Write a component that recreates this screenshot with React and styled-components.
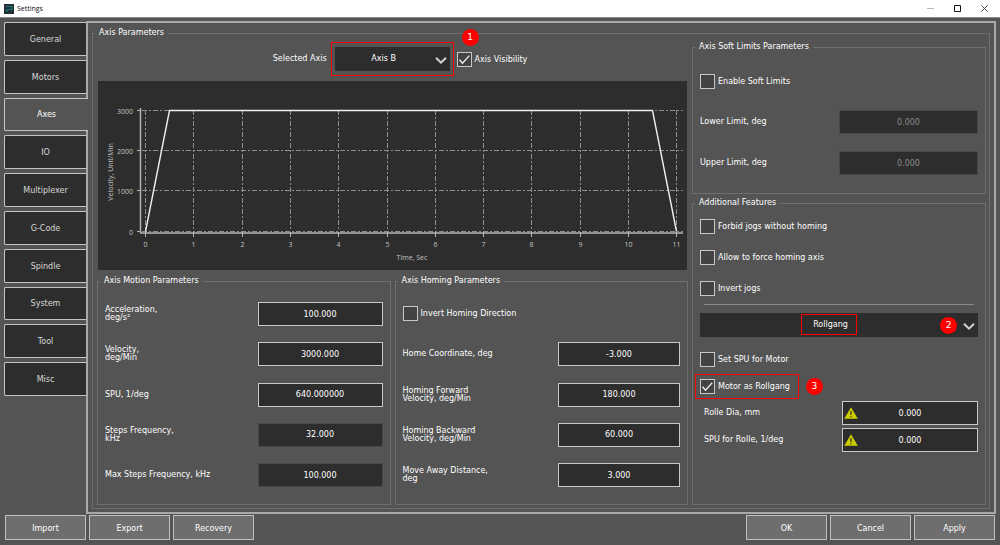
import React from "react";
import styled, { createGlobalStyle, css } from "styled-components";

const GlobalStyle = createGlobalStyle`
  *, *::before, *::after { box-sizing: border-box; }
  body {
    margin: 0;
    background: #545454;
    color: #fff;
    font: 8px/12px "DejaVu Sans", Verdana, sans-serif;
  }
  button, input, select { font: inherit; color: inherit; }
`;

const Window = styled.div`
  display: flex;
  flex-direction: column;
  min-height: 100vh;
  background: #545454;
`;

const TitleBar = styled.header`
  display: flex;
  align-items: center;
  gap: 3px;
  height: 18px;
  padding: 0 4px;
  background: #fff;
  border-bottom: 1px solid #8a8a8a;
  color: #111;
  font-family: "Open Sans", "Segoe UI", sans-serif;
`;

const WindowTitle = styled.h1`
  flex: 1;
  margin: 0;
  font-size: 7px;
  font-weight: 400;
`;

const WindowButton = styled.button`
  display: flex;
  justify-content: center;
  padding: 0;
  width: 24px;
  border: 0;
  background: none;
`;

const Main = styled.div`
  display: flex;
  flex: 1;
  padding: 3px 4px 1px;
`;

const Tabs = styled.nav`
  position: relative;
  z-index: 1;
  display: flex;
  flex-direction: column;
  gap: 4px;
  width: 82px;
  height: 374px;
  margin-top: 1px;
`;

const Tab = styled.button`
  flex: 1;
  padding: 2px 0 0;
  border: 1px solid #c4c4c4;
  border-right: 0;
  border-radius: 2px 0 0 2px;
  background: #2d2d2d;
  color: #d8d8d8;
  ${(p) =>
    p.$active &&
    css`
      width: calc(100% + 2px);
      background: #545454;
      color: #fff;
    `}
`;

const Panel = styled.main`
  display: flex;
  flex: 1;
  min-width: 0;
  padding: 4px 4px 3px;
  border: 2px solid #a8a8a8;
`;

const Group = styled.fieldset`
  display: flex;
  flex-direction: column;
  flex: ${(p) => (p.$grow ? 1 : "none")};
  min-width: 0;
  margin: 0;
  padding: ${(p) => p.$pad || "0 7px"};
  border: 1px solid #6e6e6e;
`;

const Legend = styled.legend`
  margin-left: ${(p) => p.$indent || 0}px;
  padding: 0 4px;
  line-height: 12px;
`;

const Columns = styled.div`
  display: grid;
  grid-template-columns: minmax(0, 1fr) 294px;
  gap: 4px;
  flex: 1;
`;

const Column = styled.div`
  display: flex;
  flex-direction: column;
  gap: ${(p) => p.$gap || 0}px;
`;

const AxisBar = styled.div`
  display: flex;
  align-items: center;
  justify-content: center;
  height: 24px;
  margin: 6px 0 10px 15px;
`;

const SelectBox = styled.div`
  position: relative;
  width: ${(p) => p.$width || "100%"};
  margin: ${(p) => p.$margin || 0};
`;

const Select = styled.select`
  display: block;
  appearance: none;
  width: 100%;
  height: 24px;
  padding: 0 17px 0 0;
  border: 0;
  border-radius: 0;
  background: #2d2d2d;
  text-align: center;
  text-align-last: center;
`;

const Chevron = styled.svg`
  position: absolute;
  right: 3px;
  top: 9px;
  width: 12px;
  height: 9px;
  pointer-events: none;
`;

const Highlight = styled.span`
  position: absolute;
  z-index: 1;
  inset: ${(p) => p.$inset};
  border: 1px solid #f00;
  pointer-events: none;
`;

const Badge = styled.span`
  position: absolute;
  top: ${(p) => p.$top};
  right: ${(p) => p.$right};
  width: 17px;
  height: 17px;
  border-radius: 50%;
  background: #f00;
  font: 9px/17px "DejaVu Sans", sans-serif;
  text-align: center;
  pointer-events: none;
`;

const CheckLabel = styled.label`
  position: relative;
  display: inline-flex;
  align-items: center;
  align-self: flex-start;
  gap: 3px;
  height: 15px;
  margin: ${(p) => p.$margin || 0};
  white-space: nowrap;
`;

const CheckInput = styled.input`
  appearance: none;
  width: 15px;
  height: 15px;
  margin: 0;
  border: 1px solid #c8c8c8;
  background: #434343;
  & + svg { display: none; }
  &:checked + svg { display: block; }
`;

const Tick = styled.svg`
  position: absolute;
  left: 0;
  top: 0;
  width: 15px;
  height: 15px;
  pointer-events: none;
`;

const Groups = styled.div`
  display: grid;
  grid-template-columns: 1fr 1fr;
  gap: 4px;
  flex: 1;
  margin-top: 5px;
`;

const Fields = styled.div`
  display: flex;
  flex-direction: column;
  flex: ${(p) => (p.$spread ? 1 : "none")};
  justify-content: space-between;
  gap: ${(p) => p.$gap}px;
  padding: ${(p) => p.$pad || 0};
`;

const Row = styled.div`
  display: flex;
  align-items: center;
  justify-content: space-between;
  height: 24px;
`;

const FieldLabel = styled.label`
  line-height: 8px;
  white-space: pre-line;
`;

const InputBox = styled.div`
  position: relative;
  width: ${(p) => p.$width}px;
`;

const Input = styled.input`
  display: block;
  width: 100%;
  height: 24px;
  padding: 0;
  border: 1px solid #c8c8c8;
  border-radius: 0;
  background: #2d2d2d;
  text-align: center;
  ${(p) => p.readOnly && css`border-color: #484848;`}
  &:disabled {
    border-color: #484848;
    color: #8c8c8c;
  }
`;

const WarningIcon = styled.svg`
  position: absolute;
  left: 2px;
  top: 6px;
  width: 14px;
  height: 12px;
`;

const Divider = styled.hr`
  width: calc(100% - 8px);
  margin: 8px 4px;
  border: 0;
  border-top: 1px solid #8c8c8c;
`;

const ChartFrame = styled.div`
  margin: 0 1px;
  background: #2d2d2d;
`;

const ChartSvg = styled.svg`
  display: block;
  width: 100%;
  height: 189px;
  fill: #c4c4c4;
  font: 7px "Open Sans", "Noto Sans", sans-serif;
`;

const Footer = styled.footer`
  display: flex;
  gap: 3px;
  padding: 0 5px 5px;
`;

const Button = styled.button`
  width: 81px;
  height: 25px;
  padding: 2px 0 0;
  border: 1px solid #c0c0c0;
  background: #6e6e6e;
`;

const Spacer = styled.div`
  flex: 1;
`;

function Check({ label, checked, margin, children }) {
  return (
    <CheckLabel $margin={margin}>
      <CheckInput type="checkbox" defaultChecked={checked} />
      <Tick viewBox="0 0 15 15" fill="none" stroke="#f4f4f4" strokeWidth="1.3">
        <path d="M2.5 7.8 5.5 11.2 12.3 3.6" />
      </Tick>
      {label}
      {children}
    </CheckLabel>
  );
}

function Dropdown({ id, value, label, width, margin, children }) {
  return (
    <SelectBox $width={width} $margin={margin}>
      <Select id={id} aria-label={label} defaultValue={value}>
        <option>{value}</option>
      </Select>
      <Chevron viewBox="0 0 12 9" fill="none" stroke="#d4d4d4" strokeWidth="2">
        <path d="M1 1.8 6 6.6 11 1.8" />
      </Chevron>
      {children}
    </SelectBox>
  );
}

function Field({ id, label, value, width, disabled, readOnly, warning }) {
  return (
    <Row>
      <FieldLabel htmlFor={id}>{label}</FieldLabel>
      <InputBox $width={width}>
        <Input id={id} defaultValue={value} disabled={disabled} readOnly={readOnly} />
        {warning && (
          <WarningIcon viewBox="0 0 14 12">
            <path d="M7 0.3 13.8 11.8H0.2Z" fill="#cccc00" />
            <path d="M7 4V8M7 9V10.3" stroke="#4a4a10" strokeWidth="1.4" />
          </WarningIcon>
        )}
      </InputBox>
    </Row>
  );
}

const X0 = 47.5;
const STEP = 48.3;
const xTicks = Array.from({ length: 12 }, (_, i) => ({ value: i, x: Math.round(X0 + i * STEP - 0.5) + 0.5 }));
const yTicks = [
  { value: 3000, y: 29.5 },
  { value: 2000, y: 69.5 },
  { value: 1000, y: 109.5 },
  { value: 0, y: 150.5 },
];

function VelocityChart() {
  return (
    <ChartFrame>
      <ChartSvg viewBox="0 0 589 189" role="img" aria-label="Velocity profile">
        <g stroke="#8e8e8e" strokeDasharray="5 2 2 2">
          {xTicks.map((t) => (
            <path key={t.value} d={`M${t.x} 29V150`} />
          ))}
          {yTicks.map((t) => (
            <path key={t.value} d={`M44 ${t.y}H585`} />
          ))}
        </g>
        <g stroke="#b4b4b4">
          {xTicks.map((t) => (
            <path key={t.value} d={`M${t.x} 151V156`} />
          ))}
          {yTicks.map((t) => (
            <path key={t.value} d={`M39 ${t.y}H43`} />
          ))}
          <path d="M42.5 27V152M42 152H585" strokeWidth="1.5" />
        </g>
        <path
          d={`M${X0} 150.5 71.5 29.5H554.5L578.5 150.5`}
          fill="none"
          stroke="#f0f0f0"
          strokeWidth="1.4"
        />
        {xTicks.map((t) => (
          <text key={t.value} x={t.x} y="166" textAnchor="middle">{t.value}</text>
        ))}
        {yTicks.map((t) => (
          <text key={t.value} x="35" y={t.y + 3} textAnchor="end">{t.value}</text>
        ))}
        <text x="314" y="179" textAnchor="middle">Time, Sec</text>
        <text transform="translate(15 91) rotate(-90)" textAnchor="middle">
          Velocity, Unit/Min
        </text>
      </ChartSvg>
    </ChartFrame>
  );
}

const tabs = ["General", "Motors", "Axes", "IO", "Multiplexer", "G-Code", "Spindle", "System", "Tool", "Misc"];

export default function App() {
  return (
    <Window>
      <GlobalStyle />
      <TitleBar>
        <svg width="10" height="10" viewBox="0 0 10 10" aria-hidden="true">
          <rect width="10" height="10" fill="#263033" />
          <path d="M2 2.5H8V5.5H3V8" fill="none" stroke="#12807e" strokeWidth="1.2" />
        </svg>
        <WindowTitle>Settings</WindowTitle>
        <WindowButton aria-label="Minimize">
          <svg width="7" height="7" viewBox="0 0 7 7"><path d="M0 3.5H7" stroke="#bbb" /></svg>
        </WindowButton>
        <WindowButton aria-label="Maximize">
          <svg width="7" height="7" viewBox="0 0 7 7"><path d="M.5 .5H6.5V6.5H.5Z" fill="none" stroke="#111" /></svg>
        </WindowButton>
        <WindowButton aria-label="Close">
          <svg width="7" height="7" viewBox="0 0 7 7"><path d="M.5 .5 6.5 6.5M6.5 .5 .5 6.5" stroke="#444" /></svg>
        </WindowButton>
      </TitleBar>

      <Main>
        <Tabs aria-label="Settings sections">
          {tabs.map((t) => (
            <Tab key={t} $active={t === "Axes"}>{t}</Tab>
          ))}
        </Tabs>

        <Panel>
          <Group $grow $pad="2px 3px 3px 4px">
            <Legend $indent={-2}>Axis Parameters</Legend>
            <Columns>
              <Column>
                <AxisBar>
                  <FieldLabel htmlFor="axis">Selected Axis</FieldLabel>
                  <Dropdown id="axis" value="Axis B" width="115px" margin="0 7px 0 8px">
                    <Highlight $inset="-5px -4px" />
                    <Badge $top="-18px" $right="-29px">1</Badge>
                  </Dropdown>
                  <Check label="Axis Visibility" checked margin="5px 0 0" />
                </AxisBar>
                <VelocityChart />
                <Groups>
                  <Group>
                    <Legend $indent={-5}>Axis Motion Parameters</Legend>
                    <Fields $spread $pad="15px 0 17px">
                      <Field id="acc" label={"Acceleration,\ndeg/s²"} value="100.000" width={125} />
                      <Field id="vel" label={"Velocity,\ndeg/Min"} value="3000.000" width={125} />
                      <Field id="spu" label="SPU, 1/deg" value="640.000000" width={125} />
                      <Field id="freq" label={"Steps Frequency,\nkHz"} value="32.000" width={125} readOnly />
                      <Field id="maxfreq" label="Max Steps Frequency, kHz" value="100.000" width={125} readOnly />
                    </Fields>
                  </Group>
                  <Group>
                    <Legend $indent={-5}>Axis Homing Parameters</Legend>
                    <Fields $spread $pad="15px 0 17px">
                      <Row>
                        <Check label="Invert Homing Direction" margin="4px 0 0" />
                      </Row>
                      <Field id="home" label="Home Coordinate, deg" value="-3.000" width={122} />
                      <Field id="fwd" label={"Homing Forward\nVelocity, deg/Min"} value="180.000" width={122} />
                      <Field id="bwd" label={"Homing Backward\nVelocity, deg/Min"} value="60.000" width={122} />
                      <Field id="away" label={"Move Away Distance,\ndeg"} value="3.000" width={122} />
                    </Fields>
                  </Group>
                </Groups>
              </Column>

              <Column $gap={3}>
                <Group>
                  <Legend $indent={-5}>Axis Soft Limits Parameters</Legend>
                  <Check label="Enable Soft Limits" margin="21px 0" />
                  <Fields $gap={17} $pad="0 0 18px">
                    <Field id="lower" label="Lower Limit, deg" value="0.000" width={139} disabled />
                    <Field id="upper" label="Upper Limit, deg" value="0.000" width={139} disabled />
                  </Fields>
                </Group>
                <Group $grow>
                  <Legend $indent={-5}>Additional Features</Legend>
                  <Fields $gap={16} $pad="10px 0 0">
                    <Check label="Forbid jogs without homing" />
                    <Check label="Allow to force homing axis" />
                    <Check label="Invert jogs" />
                  </Fields>
                  <Divider />
                  <Dropdown value="Rollgang" label="Axis feature">
                    <Highlight $inset="1px calc(50% - 18px) 2px calc(50% - 38px)" />
                    <Badge $top="4px" $right="21px">2</Badge>
                  </Dropdown>
                  <Fields $gap={12} $pad="15px 0 7px">
                    <Check label="Set SPU for Motor" />
                    <Check label="Motor as Rollgang" checked>
                      <Highlight $inset="-5px -9px -5px -5px" />
                      <Badge $top="-1px" $right="-33px">3</Badge>
                    </Check>
                  </Fields>
                  <Fields $gap={3} $pad="0 0 0 4px">
                    <Field id="dia" label="Rolle Dia, mm" value="0.000" width={136} warning />
                    <Field id="spurolle" label="SPU for Rolle, 1/deg" value="0.000" width={136} warning />
                  </Fields>
                </Group>
              </Column>
            </Columns>
          </Group>
        </Panel>
      </Main>

      <Footer>
        <Button>Import</Button>
        <Button>Export</Button>
        <Button>Recovery</Button>
        <Spacer />
        <Button>OK</Button>
        <Button>Cancel</Button>
        <Button>Apply</Button>
      </Footer>
    </Window>
  );
}
